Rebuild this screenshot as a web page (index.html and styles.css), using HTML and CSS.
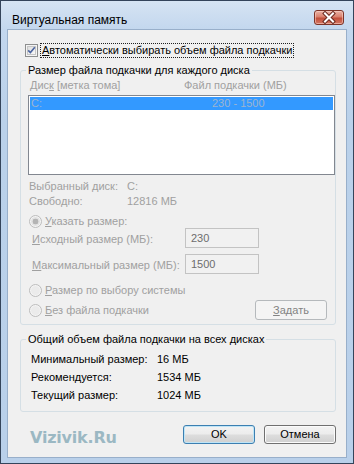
FILE: index.html
```html
<!DOCTYPE html>
<html lang="ru">
<head>
<meta charset="utf-8">
<title>Виртуальная память</title>
<link rel="stylesheet" href="styles.css">
</head>
<body>
<div class="window">
  <div class="titlebar">
    <span class="title">Виртуальная память</span>
    <div class="close">
      <svg width="30" height="15" viewBox="0 0 30 15">
        <path d="M11 3.5 L19 11.5 M19 3.5 L11 11.5" stroke="#6b2a20" stroke-width="4" stroke-linecap="square" fill="none"/>
        <path d="M11 3.5 L19 11.5 M19 3.5 L11 11.5" stroke="#ffffff" stroke-width="2" stroke-linecap="square" fill="none"/>
      </svg>
    </div>
  </div>
  <div class="client">
    <div class="auto-row">
      <span class="checkbox">
        <svg width="13" height="13" viewBox="0 0 13 13">
          <defs>
            <linearGradient id="cbg" x1="0" y1="0" x2="1" y2="1">
              <stop offset="0" stop-color="#dcdcdc"/>
              <stop offset="1" stop-color="#fbfbfb"/>
            </linearGradient>
          </defs>
          <rect x="0.5" y="0.5" width="12" height="12" fill="#f4f4f4" stroke="#8e8f8f"/>
          <rect x="2.5" y="2.5" width="8" height="8" fill="url(#cbg)" stroke="#c6c6c6"/>
          <path d="M3.2 6.4 L5.4 8.6 L9.8 3.2" stroke="#4b64a0" stroke-width="1.6" fill="none"/>
        </svg>
      </span>
      <span class="focus"><u>А</u>втоматически выбирать объем файла подкачки</span>
    </div>

    <fieldset class="group group-drives">
      <legend>Размер файла подкачки для каждого диска</legend>
      <div class="cols disabled">
        <span class="col-drive">Дис<u>к</u> [метка тома]</span>
        <span class="col-size">Файл подкачки (МБ)</span>
      </div>
      <div class="listbox">
        <div class="lb-row">
          <span class="lb-drive">C:</span>
          <span class="lb-size">230 - 1500</span>
        </div>
      </div>
      <div class="info disabled">
        <div class="info-row"><span class="info-label">Выбранный диск:</span><span>C:</span></div>
        <div class="info-row"><span class="info-label">Свободно:</span><span>12816 МБ</span></div>
      </div>
      <div class="radio-row r1 disabled">
        <svg class="radio" width="13" height="13" viewBox="0 0 13 13">
          <circle cx="6.5" cy="6.5" r="6" fill="#f4f4f4" stroke="#bcbcbc"/>
          <circle cx="6.5" cy="6.5" r="3" fill="#b4b4b4"/>
          <circle cx="6.5" cy="6.5" r="4" fill="none" stroke="#dedede"/>
        </svg>
        <span><u>У</u>казать размер:</span>
      </div>
      <div class="size-grid disabled">
        <span class="size-label"><u>И</u>сходный размер (МБ):</span>
        <div class="input">230</div>
        <span class="size-label"><u>М</u>аксимальный размер (МБ):</span>
        <div class="input">1500</div>
      </div>
      <div class="radio-row r2 disabled">
        <svg class="radio" width="13" height="13" viewBox="0 0 13 13">
          <circle cx="6.5" cy="6.5" r="6" fill="#f4f4f4" stroke="#bcbcbc"/>
          <circle cx="6.5" cy="6.5" r="4.5" fill="#ebebeb"/>
        </svg>
        <span><u>Р</u>азмер по выбору системы</span>
      </div>
      <div class="radio-row r3 disabled">
        <svg class="radio" width="13" height="13" viewBox="0 0 13 13">
          <circle cx="6.5" cy="6.5" r="6" fill="#f4f4f4" stroke="#bcbcbc"/>
          <circle cx="6.5" cy="6.5" r="4.5" fill="#ebebeb"/>
        </svg>
        <span><u>Б</u>ез файла подкачки</span>
        <button class="btn btn-set" disabled><u>З</u>адать</button>
      </div>
    </fieldset>

    <fieldset class="group group-total">
      <legend>Общий объем файла подкачки на всех дисках</legend>
      <div class="total-row"><span class="total-label">Минимальный размер:</span><span>16 МБ</span></div>
      <div class="total-row"><span class="total-label">Рекомендуется:</span><span>1534 МБ</span></div>
      <div class="total-row"><span class="total-label">Текущий размер:</span><span>1024 МБ</span></div>
    </fieldset>

    <div class="footer">
      <span class="watermark">Vizivik.Ru</span>
      <button class="btn btn-ok">OK</button>
      <button class="btn btn-cancel">Отмена</button>
    </div>
  </div>
</div>
</body>
</html>
```

FILE: styles.css
```css
* { box-sizing: border-box; }

html, body {
  margin: 0;
  padding: 0;
  background: #ffffff;
}

body {
  font-family: "Liberation Sans", Arial, sans-serif;
  font-size: 11px;
  color: #000;
  white-space: nowrap;
}

.window {
  width: 354px;
  height: 464px;
  border: 1px solid #34445a;
  background: linear-gradient(180deg, #d6e4f3 0px, #c3d7ee 28px, #bad1ea 120px, #b9d0ea 100%);
  display: flex;
  flex-direction: column;
  overflow: hidden;
}

.titlebar {
  height: 28px;
  flex: none;
  display: flex;
  align-items: flex-start;
  padding-left: 11px;
}

.title {
  margin-top: 11px;
  font-size: 12px;
  line-height: 16px;
  color: #000;
}

.close {
  margin-left: auto;
  margin-top: 9px;
  margin-right: 9px;
  width: 30px;
  height: 15px;
  border: 1px solid #7d3428;
  border-radius: 3px;
  background: linear-gradient(180deg, #eab3a6 0%, #d9806d 45%, #c24f3b 55%, #d47763 100%);
  box-shadow: inset 0 0 0 1px rgba(255, 220, 210, 0.5);
  display: flex;
  align-items: center;
  justify-content: center;
  overflow: hidden;
}

.close svg {
  display: block;
  flex: none;
}

.client {
  flex: 1;
  margin: 0 6px 5px 6px;
  border: 1px solid #98afca;
  background: #f0f0f0;
  padding: 0 10px 0 12px;
  display: flex;
  flex-direction: column;
  min-height: 0;
}

.disabled {
  color: #a0a0a0;
}

/* auto checkbox */
.auto-row {
  margin-top: 12px;
  height: 16px;
  display: flex;
  align-items: center;
  line-height: 13px;
}

.checkbox {
  margin-left: 5px;
  width: 13px;
  height: 13px;
  display: block;
  flex: none;
}

.checkbox svg { display: block; }

.focus {
  margin-left: 2px;
  padding: 0 1px 0 1px;
  border: 1px dotted #202020;
}

/* group boxes */
.group {
  margin: 0;
  border: 1px solid #d5dfe5;
  border-radius: 3px;
  min-width: 0;
  flex: none;
}

.group legend {
  padding: 0 2px;
  margin-left: -2px;
  line-height: 16px;
}

.group-drives {
  margin-top: 4px;
  padding: 0 0 4px 7px;
}

.cols {
  display: flex;
  line-height: 14px;
}

.col-drive {
  width: 156px;
  flex: none;
  padding-left: 2px;
}

.listbox {
  margin-top: 3px;
  height: 80px;
  border: 1px solid #828790;
  background: #ffffff;
  padding: 1px;
}

.lb-row {
  display: flex;
  height: 13px;
  line-height: 13px;
  background: #3399ff;
  color: #9db4cf;
}

.lb-drive {
  width: 182px;
  flex: none;
  padding-left: 1px;
}

.info {
  margin-top: 4px;
  margin-left: 1px;
}

.info-row {
  display: flex;
  line-height: 15px;
}

.info-label {
  width: 98px;
  flex: none;
}

.radio-row {
  display: flex;
  align-items: center;
  padding-left: 1px;
}

.radio {
  display: block;
  flex: none;
  margin-right: 3px;
}

.r1 {
  margin-top: 5px;
  line-height: 15px;
  height: 15px;
}

.size-grid {
  margin-top: -1px;
  margin-left: 4px;
  display: grid;
  grid-template-columns: 153px 74px;
  grid-auto-rows: 20px;
  row-gap: 6px;
}

.size-label {
  line-height: 16px;
  padding-top: 3px;
}

.input {
  border: 1px solid #c3c3c3;
  background: #f1f1f1;
  color: #6d6d6d;
  line-height: 16px;
  padding: 1px 0 0 5px;
}

.r2 {
  margin-top: 7px;
  height: 19px;
  line-height: 19px;
}

.r3 {
  height: 20px;
  line-height: 20px;
}

.btn {
  font-family: inherit;
  font-size: 11px;
  margin: 0;
  padding: 0;
  width: 72px;
  flex: none;
  border-radius: 3px;
  color: #000;
}

.btn-set {
  margin-left: auto;
  margin-right: 8px;
  height: 20px;
  line-height: 18px;
  border: 1px solid #b5b9bc;
  background: #f4f4f4;
  color: #838383;
}

.group-total {
  margin-top: 6px;
  padding: 3px 0 7px 7px;
}

.total-row {
  display: flex;
  line-height: 18px;
  padding-left: 3px;
}

.total-label {
  width: 126px;
  flex: none;
}

/* footer */
.footer {
  margin-top: 13px;
  display: flex;
  align-items: flex-start;
  flex: none;
}

.watermark {
  margin-left: 10px;
  margin-top: 3px;
  font-family: "DejaVu Sans", sans-serif;
  font-weight: bold;
  font-size: 16px;
  line-height: 19px;
  color: #9bb8c3;
  letter-spacing: -0.2px;
}

.btn-ok,
.btn-cancel {
  height: 19px;
  line-height: 17px;
  background: linear-gradient(180deg, #f3f3f3 0%, #ececec 48%, #dddddd 52%, #d0d0d0 100%);
}

.btn-ok {
  margin-left: auto;
  border: 1px solid #3c7fb1;
  box-shadow: inset 0 0 0 1px #bfe5f7;
}

.btn-cancel {
  margin-left: 9px;
  border: 1px solid #707070;
  box-shadow: inset 0 0 0 1px #fbfbfb;
}
```
